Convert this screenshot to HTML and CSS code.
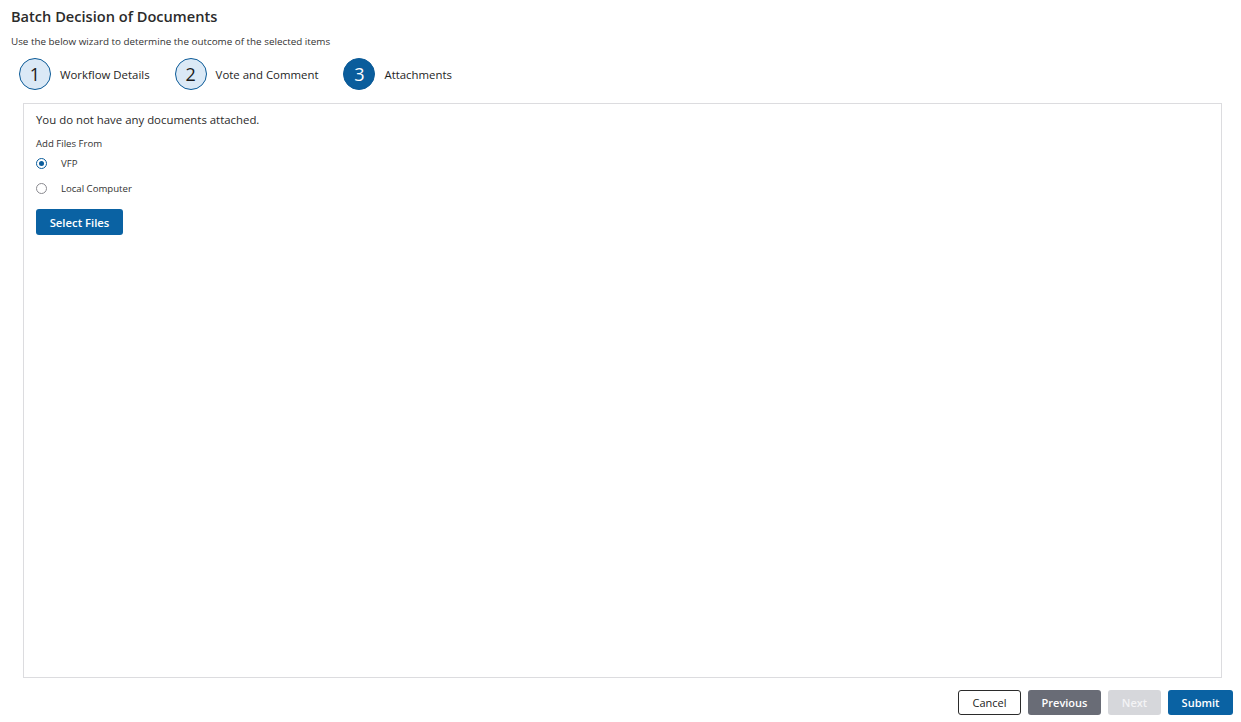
FILE: index.html
```html
<!DOCTYPE html>
<html lang="en">
<head>
<meta charset="utf-8">
<title>Batch Decision of Documents</title>
<link rel="stylesheet" href="styles.css">
</head>
<body>
<div class="page">
  <h1 class="title">Batch Decision of Documents</h1>
  <p class="subtitle">Use the below wizard to determine the outcome of the selected items</p>

  <ol class="steps">
    <li class="step"><span class="step-num">1</span><span class="step-label">Workflow Details</span></li>
    <li class="step"><span class="step-num">2</span><span class="step-label">Vote and Comment</span></li>
    <li class="step active"><span class="step-num">3</span><span class="step-label">Attachments</span></li>
  </ol>

  <section class="panel">
    <p class="empty">You do not have any documents attached.</p>
    <div class="field-label">Add Files From</div>
    <label class="radio"><input type="radio" name="source" checked><span class="radio-mark"></span><span>VFP</span></label>
    <label class="radio"><input type="radio" name="source"><span class="radio-mark"></span><span>Local Computer</span></label>
    <button class="btn btn-primary select-files" type="button">Select Files</button>
  </section>

  <div class="actions">
    <button class="btn btn-outline" type="button">Cancel</button>
    <button class="btn btn-secondary" type="button">Previous</button>
    <button class="btn btn-disabled" type="button" disabled>Next</button>
    <button class="btn btn-primary" type="button">Submit</button>
  </div>
</div>
</body>
</html>
```
FILE: styles.css
```css
* { box-sizing: border-box; }

html, body {
  margin: 0;
  padding: 0;
  background: #fff;
}

body {
  font-family: "Open Sans", "Noto Sans", sans-serif;
  color: #222;
}

.page {
  display: flex;
  flex-direction: column;
  height: 722px;
  padding: 6px 8px 7px 11px;
}

.title {
  margin: 0;
  font-size: 14.6px;
  font-weight: 600;
  line-height: 20px;
  color: #2b2b2b;
}

.subtitle {
  margin: 9px 0 0;
  font-size: 9.85px;
  line-height: 13px;
  color: #333;
}

.steps {
  list-style: none;
  margin: 10px 0 0;
  padding: 0 0 0 8px;
  display: flex;
  align-items: center;
  gap: 25px;
}

.step {
  display: flex;
  align-items: center;
  gap: 9px;
}

.step-num {
  width: 32px;
  height: 32px;
  border-radius: 50%;
  border: 1px solid #0b5a97;
  background: #dbe9f6;
  color: #1b1b1b;
  display: flex;
  align-items: center;
  justify-content: center;
  font-size: 18px;
  line-height: 1;
}

.step.active .step-num {
  background: #0a5d9c;
  color: #fff;
}

.step-label {
  font-size: 11.4px;
  color: #1e1e1e;
}

.panel {
  flex: 1;
  margin: 13px 11px 0 12px;
  border: 1px solid #dcdcdf;
  padding: 8px 12px;
  display: flex;
  flex-direction: column;
  align-items: flex-start;
}

.empty {
  margin: 0;
  font-size: 11.4px;
  line-height: 16px;
  color: #2a2a2a;
}

.field-label {
  margin-top: 9px;
  font-size: 9.6px;
  line-height: 14px;
  color: #333;
}

.radio {
  display: flex;
  align-items: center;
  height: 25px;
  font-size: 9.6px;
  color: #333;
}

.radio input {
  position: absolute;
  opacity: 0;
  width: 0;
  height: 0;
}

.radio-mark {
  width: 11px;
  height: 11px;
  border-radius: 50%;
  border: 1px solid #8a8a90;
  margin-right: 14px;
  display: flex;
  align-items: center;
  justify-content: center;
}

.radio input:checked + .radio-mark {
  border-color: #0a5d9c;
}

.radio input:checked + .radio-mark::after {
  content: "";
  width: 5px;
  height: 5px;
  border-radius: 50%;
  background: #0a5d9c;
}

.btn {
  font-family: inherit;
  font-size: 11px;
  font-weight: 600;
  height: 25px;
  padding: 0 12px;
  border-radius: 3px;
  border: 1px solid transparent;
  cursor: pointer;
}

.btn-primary {
  background: #0a62a3;
  color: #fff;
}

.btn-secondary {
  background: #696c76;
  color: #fff;
}

.btn-disabled {
  background: #d6d7db;
  color: #f3f3f5;
  cursor: default;
}

.btn-outline {
  background: #fff;
  border-color: #2b2b2b;
  color: #222;
  font-weight: 400;
}

.select-files {
  margin-top: 8px;
  width: 87px;
  height: 26px;
  padding: 0;
  font-size: 11.3px;
}

.actions {
  display: flex;
  justify-content: flex-end;
  gap: 7px;
  margin-top: 12px;
}

.actions .btn-outline { width: 63px; }
.actions .btn-secondary { width: 73px; }
.actions .btn-disabled { width: 53px; }
.actions .btn-primary { width: 65px; }
```
